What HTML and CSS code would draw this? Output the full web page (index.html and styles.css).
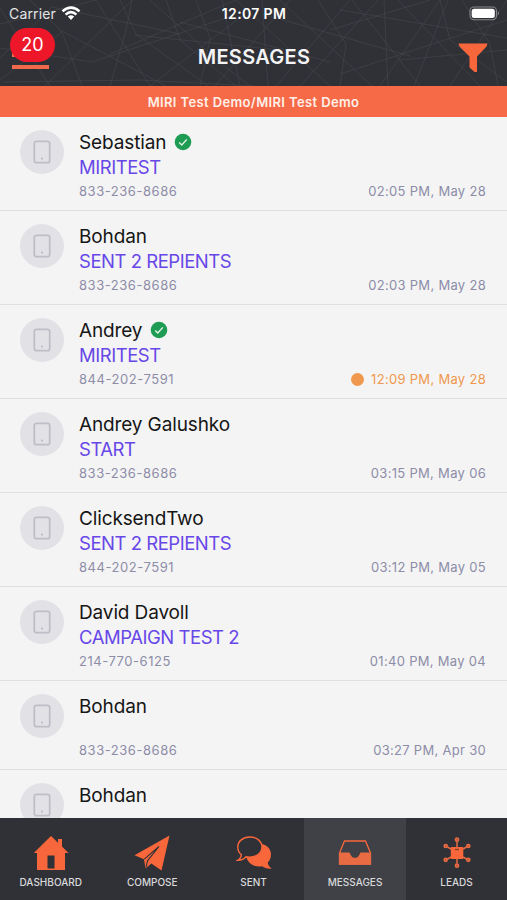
FILE: index.html
```html
<!DOCTYPE html>
<html lang="en">
<head>
<meta charset="utf-8">
<title>Messages</title>
<link rel="stylesheet" href="styles.css">
</head>
<body>
<svg class="defs" aria-hidden="true">
  <symbol id="phone" viewBox="0 0 18 24"><rect x="1.3" y="1.3" width="15.4" height="21.4" rx="2.2" fill="none" stroke="#bfbec6" stroke-width="1.8"/><circle cx="9" cy="18.6" r="1.1" fill="#bdbcc4"/></symbol>
  <symbol id="check" viewBox="0 0 18 18"><circle cx="9" cy="9" r="8.3" fill="#1f9c54"/><path d="M5.2 9.4l2.6 2.6 5-5.6" fill="none" stroke="#e4f4e9" stroke-width="1.4"/></symbol>
</svg>
<div class="screen">
  <header class="header">
    <svg class="web" viewBox="0 0 507 86" preserveAspectRatio="none" aria-hidden="true">
      <path d="M0 24L96 0M0 58L52 7L180 34M30 0L62 32L82 86M0 48L92 62L232 16M4 82L140 80L255 86M45 86L132 0M60 30L166 86M96 0L120 38L150 86M110 54L236 0M120 0L136 34L208 86M132 0L126 30L110 86M150 0L224 66L250 86M134 35L280 50M166 0L180 40L236 86M196 0L210 38L200 86M150 86L250 10M180 22L330 62M222 0L240 86M215 86L290 0M236 0L330 86M262 0L268 86M262 14L410 56M276 86L350 0M280 0L312 30L372 86M300 86L378 0M318 0L346 44L340 86M330 30L430 0M340 74L507 20M352 0L420 86M384 0L388 86M380 86L440 0M398 0L480 86M400 60L507 50M414 86L448 0M440 0L450 40L507 82M450 86L507 0M462 0L490 44L498 86M340 10L507 38M0 8L50 86M0 80L62 32"/>
    </svg>
    <div class="status">
      <div class="carrier"><span>Carrier</span>
        <svg width="20" height="15" viewBox="0 0 20 15"><g fill="none" stroke="#fff" stroke-width="2.5"><path d="M1.5 5.4Q10-2.2 18.5 5.4"/><path d="M4.6 8.6Q10 3.7 15.4 8.6"/></g><path d="M6.8 10.5Q10 7.8 13.2 10.5L10 14z" fill="#fff"/></svg>
      </div>
      <div class="clock">12:07 PM</div>
      <svg class="battery" width="31" height="15" viewBox="0 0 31 15"><rect x="1" y="1" width="26.5" height="12.7" rx="4" fill="none" stroke="#85868a" stroke-width="1.1"/><rect x="2.7" y="2.7" width="23.1" height="9.3" rx="2.5" fill="#fff"/><path d="M28.8 5Q31 7.3 28.8 9.8z" fill="#85868a"/></svg>
    </div>
    <div class="titlebar">
      <div class="menu"><i></i><i></i><span class="count">20</span></div>
      <h1>MESSAGES</h1>
      <svg class="filter" width="30" height="30" viewBox="0 0 30 30"><path d="M.5.5H29.5L28.5 3.5L19 13.5V29H16.5L11.5 24.5V13.5L1.5 3.5z" fill="#f7673b"/></svg>
    </div>
  </header>
  <div class="account">MIRI Test Demo/MIRI Test Demo</div>
  <main class="list">
    <article class="row"><div class="avatar"><svg><use href="#phone"/></svg></div><div class="body"><div class="name"><span>Sebastian</span><svg><use href="#check"/></svg></div><div class="text">MIRITEST</div><div class="meta"><span>833-236-8686</span><time>02:05 PM, May 28</time></div></div></article>
    <article class="row"><div class="avatar"><svg><use href="#phone"/></svg></div><div class="body"><div class="name"><span>Bohdan</span></div><div class="text">SENT 2 REPIENTS</div><div class="meta"><span>833-236-8686</span><time>02:03 PM, May 28</time></div></div></article>
    <article class="row"><div class="avatar"><svg><use href="#phone"/></svg></div><div class="body"><div class="name"><span>Andrey</span><svg><use href="#check"/></svg></div><div class="text">MIRITEST</div><div class="meta"><span>844-202-7591</span><time class="unread">12:09 PM, May 28</time></div></div></article>
    <article class="row"><div class="avatar"><svg><use href="#phone"/></svg></div><div class="body"><div class="name"><span>Andrey Galushko</span></div><div class="text">START</div><div class="meta"><span>833-236-8686</span><time>03:15 PM, May 06</time></div></div></article>
    <article class="row"><div class="avatar"><svg><use href="#phone"/></svg></div><div class="body"><div class="name"><span>ClicksendTwo</span></div><div class="text">SENT 2 REPIENTS</div><div class="meta"><span>844-202-7591</span><time>03:12 PM, May 05</time></div></div></article>
    <article class="row"><div class="avatar"><svg><use href="#phone"/></svg></div><div class="body"><div class="name"><span>David Davoll</span></div><div class="text">CAMPAIGN TEST 2</div><div class="meta"><span>214-770-6125</span><time>01:40 PM, May 04</time></div></div></article>
    <article class="row empty"><div class="avatar"><svg><use href="#phone"/></svg></div><div class="body"><div class="name"><span>Bohdan</span></div><div class="text"></div><div class="meta"><span>833-236-8686</span><time>03:27 PM, Apr 30</time></div></div></article>
    <article class="row empty"><div class="avatar"><svg><use href="#phone"/></svg></div><div class="body"><div class="name"><span>Bohdan</span></div></div></article>
  </main>
  <nav class="tabs">
    <a class="tab"><svg width="36" height="36" viewBox="0 0 36 36"><path fill-rule="evenodd" d="M18 1L25 7.7V4H29V11.5L35.5 18H32V35H4V18H.8zM14.5 20.5V33.5H21.5V20.5z" fill="#f7673b"/></svg><span>DASHBOARD</span></a>
    <a class="tab"><svg width="36" height="36" viewBox="0 0 36 36"><path d="M35.5 .5L.5 20.3L10 24.3L11.5 33.5L17.3 28.5L27.5 35.5z" fill="#f7673b"/><path d="M10.3 24.2L25 11.5L13.6 25.6L12 32.5" fill="none" stroke="#303136" stroke-width="1.1"/></svg><span>COMPOSE</span></a>
    <a class="tab"><svg width="36" height="36" viewBox="0 0 36 36"><path d="M25.5 9C31 10 35 14 35 19.5C35 23 33.8 25.5 31.7 27.5C32 30 33.5 32 35.7 33.6C32 34 28.5 33.2 26.2 31.2C19.5 32.5 12.5 29.5 10.5 22.5z" fill="#f7673b"/><path d="M13.8 2C6.8 2 1.8 6.3 1.8 12C1.8 15.5 3.2 18 5.3 19.5C5.3 22 4 24 1.5 25.3C5 25.5 8 24 10 21.8C18.7 23.4 26 18.8 26 12C26 6.3 20.7 2 13.8 2z" fill="#303136" stroke="#f7673b" stroke-width="1.4"/></svg><span>SENT</span></a>
    <a class="tab active"><svg width="36" height="36" viewBox="0 0 36 36"><path d="M2.5 18L7.5 6H28.5L33.5 18V29H2.5z" fill="none" stroke="#f7673b" stroke-width="1.3"/><path d="M2 17.5H12.5C13.6 19 14.1 22.8 18 22.8C21.9 22.8 22.4 19 23.5 17.5H34V29.7H2z" fill="#e86b43"/></svg><span>MESSAGES</span></a>
    <a class="tab"><svg width="36" height="36" viewBox="0 0 36 36"><g fill="none" stroke="#e86b43" stroke-width="1.5"><path d="M18 12V6.5M18 24V28.5M12 14L8.5 12M12 22L8.5 24M24 14L27.5 12M24 22L27.5 24"/><g fill="#b9573c"><circle cx="18" cy="4.7" r="1.6"/><circle cx="18" cy="30.7" r="1.6"/><circle cx="6.7" cy="11" r="1.6"/><circle cx="6.7" cy="24.8" r="1.6"/><circle cx="29.3" cy="11" r="1.6"/><circle cx="29.3" cy="24.8" r="1.6"/></g></g><rect x="11.8" y="12" width="12.5" height="12" rx=".8" fill="#f7673b"/><path d="M16 14.5h4" stroke="#7c3d2a" stroke-width="1.3"/></svg><span>LEADS</span></a>
  </nav>
</div>
</body>
</html>
```
FILE: styles.css
```css
* { box-sizing: border-box; }
body { margin: 0; font-family: Inter, "Liberation Sans", sans-serif; background: #f4f4f4; }
svg { display: block; flex: none; }
.defs { position: absolute; width: 0; height: 0; }
.screen { width: 507px; height: 900px; display: flex; flex-direction: column; overflow: hidden; }
.header { position: relative; flex: none; height: 86px; background: #303137; color: #fff; }
.web { position: absolute; inset: 0; width: 507px; height: 86px; }
.web path { fill: none; stroke: #484a50; stroke-width: .9; opacity: .6; }
.status { position: relative; height: 27px; padding: 0 8px 0 9px; display: grid; grid-template-columns: 1fr auto 1fr; align-items: center; font-size: 14px; }
.carrier { display: flex; align-items: center; gap: 5px; letter-spacing: .15px; color: #e4e4e6; }
.clock { font-weight: 600; letter-spacing: .35px; }
.battery { justify-self: end; margin-right: -1px; }
.titlebar { position: relative; height: 59px; padding: 0 19px 0 12px; display: grid; grid-template-columns: 1fr auto 1fr; align-items: center; }
.menu { position: relative; width: 37px; height: 16px; display: flex; flex-direction: column; justify-content: space-between; margin-top: 8px; }
.menu i { display: block; height: 4px; background: #f0694a; }
.count { position: absolute; left: -2px; top: -25px; width: 45px; height: 34px; border-radius: 17px; background: #ed1729; font-size: 18px; line-height: 33px; text-align: center; }
h1 { margin: 0 -8px 0 0; font-size: 20px; line-height: 24px; font-weight: 600; letter-spacing: .3px; color: #f4f4f6; }
.filter { justify-self: end; margin-top: 3px; }
.account { flex: none; height: 31px; background: #f66a48; color: #fff0e8; text-align: center; font-size: 13px; line-height: 32px; font-weight: 600; letter-spacing: .38px; }
.list { flex: 1; min-height: 0; overflow: hidden; background: #f4f4f4; }
.row { height: 94px; padding: 13px 21px 0 20px; display: flex; gap: 15px; border-bottom: 1px solid #e0e0e1; }
.row.empty { height: 89px; }
.avatar { flex: none; width: 44px; height: 44px; border-radius: 50%; background: #e2e1e6; display: flex; align-items: center; justify-content: center; }
.avatar svg { width: 18px; height: 24px; }
.body { flex: 1; }
.name { height: 25px; display: flex; align-items: center; gap: 8px; color: #161616; font-size: 19px; line-height: 25px; letter-spacing: -.13px; white-space: nowrap; }
.name svg { width: 18px; height: 18px; margin-bottom: 2px; }
.text { height: 25px; color: #6747e8; font-size: 18.5px; line-height: 25px; letter-spacing: -.47px; white-space: nowrap; }
.meta { height: 22px; display: flex; justify-content: space-between; align-items: center; color: #8d8da8; font-size: 13px; letter-spacing: .54px; }
.meta time { letter-spacing: .3px; }
.empty .text { height: 20px; }
.unread { display: flex; align-items: center; gap: 7px; }
.meta .unread { color: #f0984e; }
.unread::before { content: ""; width: 13px; height: 13px; border-radius: 50%; background: #f0984e; }
.tabs { flex: none; height: 82px; display: grid; grid-template-columns: 101.5px 101.5px 101px 102px 101px; background: #303136; }
.tab { display: flex; flex-direction: column; align-items: center; padding-top: 17px; color: #d9d9db; font-size: 10px; line-height: 14px; font-weight: 500; }
.tab span { margin-top: 4px; }
.tab.active { background: #404146; }
```
